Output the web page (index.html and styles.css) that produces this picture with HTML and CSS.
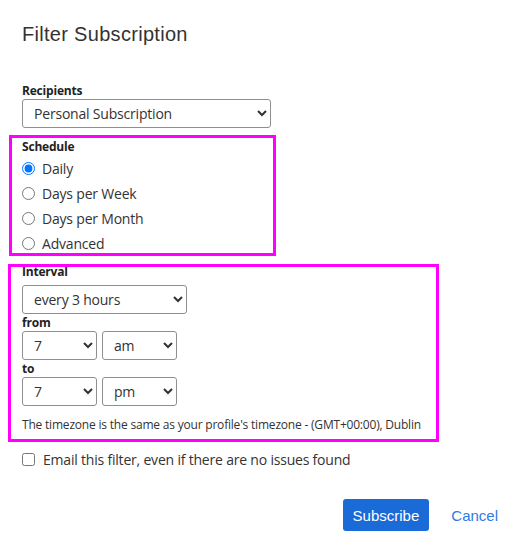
FILE: index.html
```html
<!DOCTYPE html>
<html lang="en">
<head>
  <meta charset="UTF-8" />
  <meta name="viewport" content="width=device-width, initial-scale=1.0"/>
  <title>Filter Subscription</title>
  <link rel="stylesheet" href="styles.css">
</head>
<body>

  <div class="dialog">
    <h1 class="dialog-title">Filter Subscription</h1>

    <form class="sub-form">
      <div class="field recipients">
        <label class="field-label" for="recipients">Recipients</label>
        <select id="recipients" class="sel sel-wide">
          <option>Personal Subscription</option>
          <option>Group Subscription</option>
        </select>
      </div>

      <div class="highlight schedule">
        <div class="field-label">Schedule</div>
        <label class="radio-row"><input type="radio" name="schedule" checked /> Daily</label>
        <label class="radio-row"><input type="radio" name="schedule" /> Days per Week</label>
        <label class="radio-row"><input type="radio" name="schedule" /> Days per Month</label>
        <label class="radio-row"><input type="radio" name="schedule" /> Advanced</label>
      </div>

      <div class="highlight interval">
        <label class="field-label interval-label" for="interval">Interval</label>
        <select id="interval" class="sel sel-interval">
          <option>every 3 hours</option>
          <option>once per day</option>
          <option>every hour</option>
        </select>

        <div class="field-label sub-label">from</div>
        <div class="time-row">
          <select class="sel sel-small"><option>7</option></select>
          <select class="sel sel-small"><option>am</option><option>pm</option></select>
        </div>

        <div class="field-label sub-label">to</div>
        <div class="time-row">
          <select class="sel sel-small"><option>7</option></select>
          <select class="sel sel-small"><option>pm</option><option>am</option></select>
        </div>

        <p class="tz-note">The timezone is the same as your profile's timezone - (GMT+00:00), Dublin</p>
      </div>

      <label class="check-row"><input type="checkbox" /> Email this filter, even if there are no issues found</label>

      <div class="actions">
        <button type="submit" class="btn-primary">Subscribe</button>
        <a href="javascript:void(0)" class="btn-link">Cancel</a>
      </div>
    </form>
  </div>

</body>
</html>
```

FILE: styles.css
```css
body {
  margin: 0;
  padding: 0;
  background: #ffffff;
  color: #333333;
  font-family: 'Open Sans', 'Noto Sans', sans-serif;
  letter-spacing: -0.2px;
}

.dialog {
  padding: 22px 22px 0 22px;
}

.dialog-title {
  margin: 0;
  font-family: 'Liberation Sans', Arial, sans-serif;
  font-weight: normal;
  font-size: 20px;
  line-height: 24px;
  letter-spacing: 0.3px;
  color: #333333;
}

.sub-form {
  margin-top: 37px;
}

.field-label {
  display: block;
  font-size: 12px;
  font-weight: bold;
  line-height: 15px;
  color: #222222;
}

.sel {
  display: block;
  height: 29px;
  padding: 0 0 0 7px;
  font-family: inherit;
  font-size: 14px;
  letter-spacing: -0.2px;
  color: #333333;
  background-color: #ffffff;
  border: 1px solid #8f8f8f;
  border-radius: 3px;
}

.sel-wide {
  width: 249px;
  margin-top: 1px;
}

.sel-interval {
  width: 165px;
  margin-top: 6px;
}

.sel-small {
  width: 75px;
}

.highlight {
  outline: 3px solid #ff00ff;
  box-sizing: border-box;
}

.schedule {
  margin: 10px 0 0 -10px;
  padding: 1px 0 0 10px;
  width: 261px;
  height: 115px;
}

.radio-row {
  display: flex;
  align-items: center;
  gap: 7px;
  height: 25px;
  font-size: 14px;
}

.radio-row:first-of-type {
  margin-top: 2px;
}

.radio-row input {
  margin: 0;
  width: 13px;
  height: 13px;
}

.interval {
  display: flow-root;
  margin: 14px 0 0 -11px;
  padding: 0 0 0 11px;
  width: 425px;
  height: 172px;
}

.interval-label {
  margin-top: -3px;
}

.sub-label {
  margin-top: 1px;
}

.time-row {
  display: flex;
  gap: 5px;
  margin-top: 1px;
}

.tz-note {
  margin: 11px 0 0 0;
  font-size: 12px;
  line-height: 16px;
}

.check-row {
  display: flex;
  align-items: center;
  gap: 8px;
  margin-top: 11px;
  font-size: 14px;
}

.check-row input {
  margin: 0;
  width: 13px;
  height: 13px;
}

.actions {
  display: flex;
  justify-content: flex-end;
  align-items: center;
  gap: 22px;
  margin-top: 30px;
  padding-right: 11px;
}

.btn-primary {
  height: 32px;
  padding: 0 10px;
  font-family: 'Liberation Sans', Arial, sans-serif;
  font-size: 15px;
  letter-spacing: 0;
  color: #ffffff;
  background-color: #1a6ad8;
  border: none;
  border-radius: 3px;
  cursor: pointer;
}

.btn-link {
  font-family: 'Liberation Sans', Arial, sans-serif;
  font-size: 15px;
  letter-spacing: 0;
  color: #2f7be3;
  text-decoration: none;
}
```
